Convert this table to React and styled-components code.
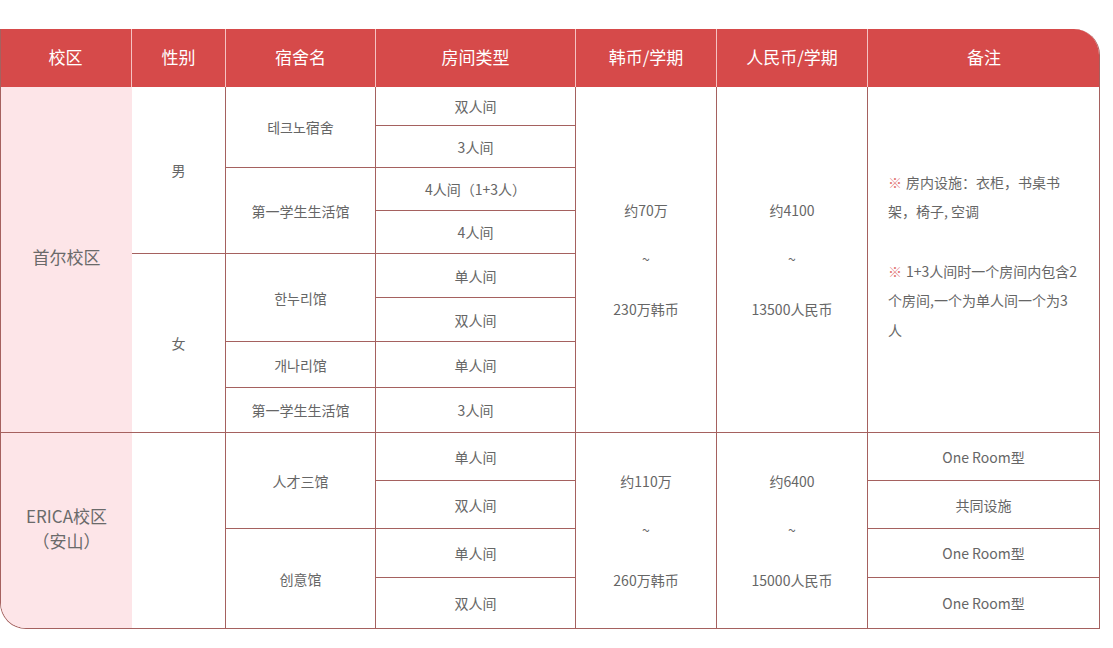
import React from "react";
import styled, { createGlobalStyle } from "styled-components";

const Global = createGlobalStyle`
  html, body { margin: 0; padding: 0; background: #fff; }
  body { font-family: "Noto Sans CJK SC", "Noto Sans", sans-serif; }
`;

const LINE = "#a5615f";

const Page = styled.div`
  padding-top: 29px;
  width: 1113px;
  height: 619px;
`;

const Table = styled.div`
  width: 1100px;
  box-sizing: border-box;
  display: grid;
  grid-template-columns: 131px 94px 150px 200px 141px 151px 231px;
  grid-template-rows: 58px 39px 42px 43px 43px 44px 44px 46px 45px 48px 48px 49px 50px;
  border: 1px solid ${LINE};
  border-top: none;
  border-radius: 0 26px 0 26px;
  overflow: hidden;
`;

const Head = styled.div`
  background: #d64a4a;
  color: #fff;
  font-size: 17px;
  font-weight: 400;
  padding-bottom: 3px;
  display: flex;
  align-items: center;
  justify-content: center;
  border-right: ${(p) => (p.$last ? "none" : "1px solid rgba(255,235,235,0.75)")};
  margin-left: ${(p) => (p.$first ? "-1px" : "0")};
  margin-right: ${(p) => (p.$last ? "-1px" : "0")};
`;

const Cell = styled.div`
  grid-column: ${(p) => p.$col};
  grid-row: ${(p) => p.$row} / span ${(p) => p.$span || 1};
  display: flex;
  flex-direction: column;
  align-items: center;
  justify-content: center;
  text-align: center;
  color: #666;
  font-size: 14px;
  line-height: 20px;
  background: ${(p) => (p.$pink ? "#fde5e8" : "#fff")};
  border-right: ${(p) => (p.$noRight ? "none" : `1px solid ${LINE}`)};
  border-bottom: ${(p) => (p.$noBottom ? "none" : `1px solid ${LINE}`)};
`;

const Campus = styled.span`
  font-size: 17px;
  line-height: 25px;
  color: #6a6a6a;
  position: relative;
  top: -3px;
`;

const PriceText = styled.div`
  line-height: 24.7px;
  white-space: pre;
`;

const Note = styled.div`
  align-self: stretch;
  text-align: left;
  padding: 0 20px 6px;
  line-height: 29.6px;
  font-size: 14px;
  color: #666;
`;

const Para = styled.p`
  margin: 0;
  & + & { margin-top: 29.6px; }
`;

const Mark = styled.span`
  color: #e27474;
  margin-right: 4px;
`;

const headers = ["校区", "性别", "宿舍名", "房间类型", "韩币/学期", "人民币/学期", "备注"];

const rooms = [
  "双人间", "3人间", "4人间（1+3人）", "4人间", "单人间", "双人间", "单人间", "3人间",
  "单人间", "双人间", "单人间", "双人间",
];

const dorms = [
  { name: "테크노宿舍", row: 2, span: 2 },
  { name: "第一学生生活馆", row: 4, span: 2 },
  { name: "한누리馆", row: 6, span: 2 },
  { name: "개나리馆", row: 8, span: 1 },
  { name: "第一学生生活馆", row: 9, span: 1 },
  { name: "人才三馆", row: 10, span: 2, last: false },
  { name: "创意馆", row: 12, span: 2, last: true },
];

const ericaNotes = ["One Room型", "共同设施", "One Room型", "One Room型"];

export default function App() {
  return (
    <Page>
      <Global />
      <Table>
        {headers.map((h, i) => (
          <Head key={h} $first={i === 0} $last={i === headers.length - 1}>
            {h}
          </Head>
        ))}

        <Cell $col={1} $row={2} $span={8} $pink $noRight>
          <Campus>首尔校区</Campus>
        </Cell>
        <Cell $col={1} $row={10} $span={4} $pink $noRight $noBottom>
          <Campus>ERICA校区</Campus>
          <Campus>（安山）</Campus>
        </Cell>

        <Cell $col={2} $row={2} $span={4}>男</Cell>
        <Cell $col={2} $row={6} $span={4}>女</Cell>
        <Cell $col={2} $row={10} $span={4} $noBottom />

        {dorms.map((d) => (
          <Cell key={d.row} $col={3} $row={d.row} $span={d.span} $noBottom={d.last}>
            {d.name}
          </Cell>
        ))}

        {rooms.map((r, i) => (
          <Cell key={i} $col={4} $row={i + 2} $noBottom={i === rooms.length - 1}>
            {r}
          </Cell>
        ))}

        <Cell $col={5} $row={2} $span={8}>
          <PriceText>{"约70万\n\n~\n\n230万韩币"}</PriceText>
        </Cell>
        <Cell $col={6} $row={2} $span={8}>
          <PriceText>{"约4100\n\n~\n\n13500人民币"}</PriceText>
        </Cell>
        <Cell $col={5} $row={10} $span={4} $noBottom>
          <PriceText>{"约110万\n\n~\n\n260万韩币"}</PriceText>
        </Cell>
        <Cell $col={6} $row={10} $span={4} $noBottom>
          <PriceText>{"约6400\n\n~\n\n15000人民币"}</PriceText>
        </Cell>

        <Cell $col={7} $row={2} $span={8} $noRight>
          <Note>
            <Para>
              <Mark>※</Mark>房内设施：衣柜，书桌书架，椅子, 空调
            </Para>
            <Para>
              <Mark>※</Mark>1+3人间时一个房间内包含2个房间,一个为单人间一个为3人
            </Para>
          </Note>
        </Cell>

        {ericaNotes.map((n, i) => (
          <Cell key={i} $col={7} $row={10 + i} $noRight $noBottom={i === ericaNotes.length - 1}>
            {n}
          </Cell>
        ))}
      </Table>
    </Page>
  );
}
